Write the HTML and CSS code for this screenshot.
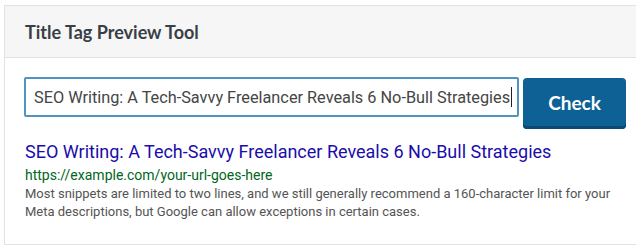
FILE: index.html
```html
<!DOCTYPE html>
<html lang="en">
<head>
<meta charset="utf-8">
<title>Title Tag Preview Tool</title>
<link rel="stylesheet" href="styles.css">
</head>
<body>
<div class="panel">
  <div class="panel-header">
    <h2 class="panel-title">Title Tag Preview Tool</h2>
  </div>
  <div class="panel-body">
    <div class="form-row">
      <div class="text-input"><span class="input-text">SEO Writing: A Tech-Savvy Freelancer Reveals 6 No-Bull Strategies</span><span class="caret"></span></div>
      <button class="check-btn" type="button">Check</button>
    </div>
    <div class="serp">
      <div class="serp-title">SEO Writing: A Tech-Savvy Freelancer Reveals 6 No-Bull Strategies</div>
      <div class="serp-url">https://example.com/your-url-goes-here</div>
      <div class="serp-desc">Most snippets are limited to two lines, and we still generally recommend a 160-character limit for your Meta descriptions, but Google can allow exceptions in certain cases.</div>
    </div>
  </div>
</div>
</body>
</html>
```
FILE: styles.css
```css
html, body {
  margin: 0;
  padding: 0;
  background: #ffffff;
}
html {
  overflow: hidden;
}
.panel {
  margin: 5px 0 0 4px;
  border-top: 1px solid #e2e2e2;
  border-left: 1px solid #e2e2e2;
  border-bottom: 1px solid #e2e2e2;
  height: 240px;
  box-sizing: border-box;
  background: #fff;
}
.panel-header {
  height: 51px;
  background: #f6f6f6;
  border-bottom: 1px solid #e2e2e2;
  display: flex;
  align-items: center;
  padding-left: 20px;
}
.panel-title {
  margin: 0;
  font-family: Lato, "Liberation Sans", sans-serif;
  font-weight: 700;
  font-size: 18px;
  color: #3a3e47;
}
.panel-body {
  padding: 19px 0 0 19px;
}
.form-row {
  display: flex;
  align-items: flex-start;
  gap: 4px;
}
.text-input {
  width: 495px;
  height: 40px;
  box-sizing: border-box;
  border: 2px solid #4f95c4;
  border-radius: 2px;
  display: flex;
  align-items: center;
  padding-left: 8px;
  font-family: Roboto, "Liberation Sans", sans-serif;
  font-size: 16.3px;
  color: #454545;
  white-space: nowrap;
  overflow: hidden;
}
.caret {
  display: inline-block;
  flex: none;
  width: 1px;
  height: 20px;
  background: #222;
  margin-left: 1px;
}
.check-btn {
  margin-top: 1px;
  width: 103px;
  height: 51px;
  border: none;
  border-radius: 4px;
  background: #0e6195;
  box-shadow: inset 0 -3px 0 #0a4a73;
  color: #ffffff;
  font-family: Lato, "Liberation Sans", sans-serif;
  font-weight: 700;
  font-size: 19px;
  padding: 0 0 2px 0;
  cursor: pointer;
}
.serp {
  margin-top: 12px;
  padding-left: 1px;
}
.serp-title {
  font-family: Roboto, "Liberation Sans", sans-serif;
  font-size: 18px;
  line-height: 22px;
  color: #1a0dab;
  white-space: nowrap;
}
.serp-url {
  margin-top: 2px;
  font-family: Roboto, "Liberation Sans", sans-serif;
  font-size: 14px;
  line-height: 20px;
  color: #006621;
}
.serp-desc {
  width: 600px;
  font-family: Roboto, "Liberation Sans", sans-serif;
  font-size: 13px;
  line-height: 18px;
  color: #545454;
}
```
